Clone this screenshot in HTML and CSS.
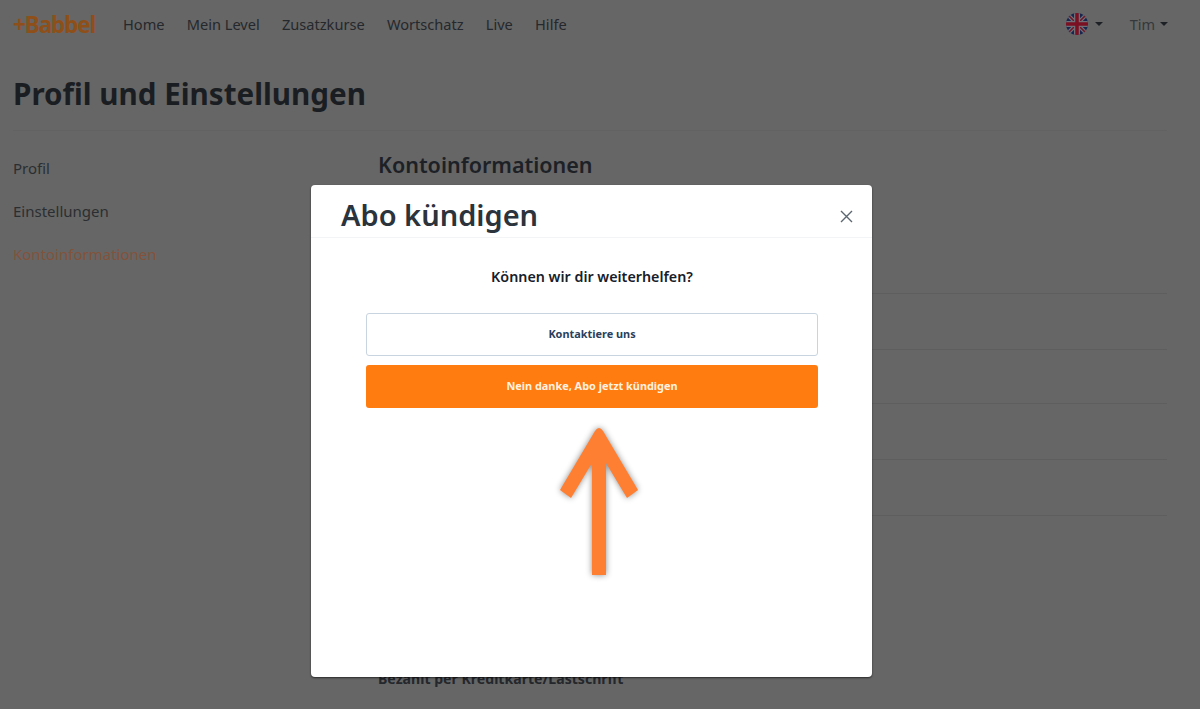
FILE: index.html

```html
<!DOCTYPE html>
<html lang="de">
<head>
    <meta charset="UTF-8">
    <meta name="viewport" content="width=device-width, initial-scale=1.0">
    <title>Babbel - Profil und Einstellungen</title>
    <link rel="stylesheet" href="styles.css">
</head>
<body>

    <header class="topbar">
        <a class="logo" href="#">+Babbel</a>
        <nav class="main-nav">
            <a href="#">Home</a>
            <a href="#">Mein Level</a>
            <a href="#">Zusatzkurse</a>
            <a href="#">Wortschatz</a>
            <a href="#">Live</a>
            <a href="#">Hilfe</a>
        </nav>
        <div class="lang-menu">
            <svg class="flag" width="24" height="24" viewBox="0 0 24 24">
                <defs>
                    <clipPath id="flagClip"><circle cx="12" cy="12" r="11"/></clipPath>
                </defs>
                <g clip-path="url(#flagClip)">
                    <rect width="24" height="24" fill="#17264e"/>
                    <path d="M0 0L24 24M24 0L0 24" stroke="#6f6f78" stroke-width="4"/>
                    <path d="M0 0L24 24M24 0L0 24" stroke="#6e1526" stroke-width="1.5"/>
                    <path d="M12 0V24M0 12H24" stroke="#6f6f78" stroke-width="6"/>
                    <path d="M12 0V24M0 12H24" stroke="#7a1022" stroke-width="3.5"/>
                </g>
            </svg>
            <span class="caret"></span>
        </div>
        <div class="user-menu">Tim<span class="caret"></span></div>
    </header>

    <h1 class="page-title">Profil und Einstellungen</h1>

    <main class="columns">
        <aside class="side-nav">
            <a href="#">Profil</a>
            <a href="#">Einstellungen</a>
            <a href="#" class="active">Kontoinformationen</a>
        </aside>
        <section class="account">
            <h2>Kontoinformationen</h2>
            <div class="row row-first"></div>
            <div class="row"></div>
            <div class="row row-short"></div>
            <div class="row"></div>
            <div class="row"></div>
            <p class="pay-method">Bezahlt per Kreditkarte/Lastschrift</p>
        </section>
    </main>

    <!-- Kündigen dialog -->
    <div class="modal">
        <div class="modal-head">
            <h2>Abo kündigen</h2>
            <svg class="close" width="13" height="13" viewBox="0 0 13 13">
                <path d="M1 1L12 12M12 1L1 12" stroke="#5c6670" stroke-width="1.4" fill="none"/>
            </svg>
        </div>
        <div class="modal-body">
            <p class="question">Können wir dir weiterhelfen?</p>
            <button class="btn btn-outline">Kontaktiere uns</button>
            <button class="btn btn-orange">Nein danke, Abo jetzt kündigen</button>
        </div>
        <svg class="arrow" width="100" height="170" viewBox="0 0 100 170">
            <path d="M50 8Q48 8 46 11L11 70L22 78L43 43V155H57V43L78 78L89 70L54 11Q52 8 50 8Z" fill="#ff7f32"/>
        </svg>
    </div>

</body>
</html>
```

FILE: styles.css

```css
html, body {
    height: 100%;
}
body {
    margin: 0;
    background-color: #666;
    color: #1d2126;
    font-family: "Noto Sans", Arial, sans-serif;
    overflow: hidden;
}
a {
    color: inherit;
    text-decoration: none;
}
.topbar {
    display: flex;
    align-items: center;
    height: 48px;
    padding: 0 32px 0 13px;
}
.logo {
    width: 110px;
    color: #8f4f18;
    font-size: 22.5px;
    font-weight: 700;
    letter-spacing: -1.1px;
}
.main-nav {
    display: flex;
    gap: 22.2px;
    font-size: 14.6px;
    color: #25282c;
}
.lang-menu {
    display: flex;
    align-items: center;
    margin-left: auto;
    margin-right: 27px;
}
.flag {
    margin-right: 6px;
}
.caret {
    display: inline-block;
    width: 0;
    height: 0;
    border-left: 4px solid transparent;
    border-right: 4px solid transparent;
    border-top: 4px solid #1d2126;
}
.user-menu {
    display: flex;
    align-items: center;
    gap: 5px;
    font-size: 14.5px;
    color: #35383b;
}
.page-title {
    margin: 27px 33px 0 13px;
    padding-bottom: 17px;
    border-bottom: 1px solid #626262;
    font-size: 29.6px;
    line-height: 38px;
    font-weight: 700;
    color: #1a1d21;
}
.columns {
    display: flex;
    padding: 0 33px 0 13px;
}
.side-nav {
    display: flex;
    flex-direction: column;
    gap: 23px;
    width: 365px;
    padding-top: 27px;
    font-size: 15px;
    line-height: 20px;
    color: #2b2e31;
}
.side-nav .active {
    color: #84523a;
}
.account {
    flex: 1;
    padding-top: 20px;
}
.account h2 {
    margin: 0;
    font-size: 21.5px;
    line-height: 28px;
    font-weight: 600;
    color: #1d2126;
}
.row {
    height: 55px;
    border-bottom: 1px solid #5e5e5e;
}
.row-first {
    height: 114px;
}
.row-short {
    height: 53px;
}
.pay-method {
    margin: 153px 0 0;
    font-size: 14.1px;
    line-height: 20px;
    font-weight: 700;
    color: #24272b;
}
.modal {
    position: absolute;
    left: 311px;
    top: 185px;
    width: 561px;
    height: 492px;
    background-color: #fff;
    border-radius: 4px;
    box-shadow: 0 1px 2px rgba(0, 0, 0, 0.6);
}
.modal-head {
    display: flex;
    align-items: center;
    justify-content: space-between;
    height: 52px;
    padding: 0 19px 0 30px;
    border-bottom: 1px solid #f3f4f5;
}
.modal-head h2 {
    margin: 8px 0 0;
    font-size: 29px;
    line-height: 40px;
    font-weight: 600;
    color: #2b333c;
}
.close {
    margin-top: 10px;
}
.modal-body {
    display: flex;
    flex-direction: column;
    align-items: center;
    padding: 29px 54px 0 55px;
}
.question {
    margin: 0 0 26px;
    font-size: 14.3px;
    line-height: 20px;
    font-weight: 600;
    color: #17202a;
}
.btn {
    width: 100%;
    height: 43px;
    padding: 0 0 2px;
    border-radius: 3px;
    font-family: inherit;
    font-size: 10.9px;
    font-weight: 700;
}
.btn-outline {
    margin-bottom: 9px;
    background-color: #fff;
    border: 1px solid #c8d5e0;
    color: #2a3f5c;
}
.btn-orange {
    background-color: #ff7c10;
    border: none;
    color: #fff3e0;
}
.arrow {
    position: absolute;
    left: 238px;
    top: 235px;
    filter: drop-shadow(0 0 3px rgba(0, 0, 0, 0.45));
}
```
